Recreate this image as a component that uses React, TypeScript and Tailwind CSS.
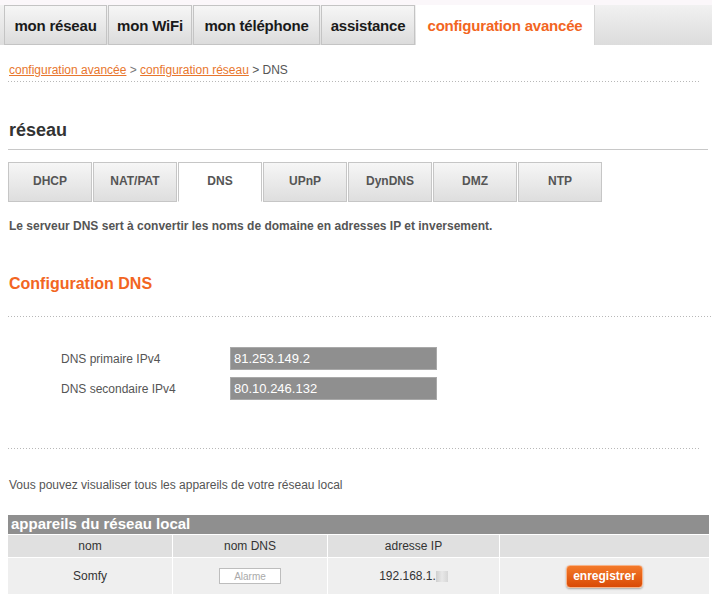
import React from 'react';

const mainTabs = [
  { label: 'mon réseau', w: 'w-[103px]' },
  { label: 'mon WiFi', w: 'w-[84px]' },
  { label: 'mon téléphone', w: 'w-[127px]' },
  { label: 'assistance', w: 'w-[94px]' },
];

const subTabs = ['DHCP', 'NAT/PAT', 'DNS', 'UPnP', 'DynDNS', 'DMZ', 'NTP'];

const Dotted = ({ className = '' }: { className?: string }) => (
  <div
    className={
      'h-px bg-[linear-gradient(to_right,#b8b8b8_1px,transparent_1px)] bg-[length:3px_1px] ' + className
    }
  />
);

export default function App() {
  return (
    <div className="w-[712px] h-[600px] overflow-hidden bg-white font-['Liberation_Sans',Arial,sans-serif] text-[#555]">
      {/* top navigation */}
      <div className="h-[5px] bg-[#fbf7fa]" />
      <div className="flex h-[40px] pl-[4px] bg-[linear-gradient(#f2f2f2,#dedede)]">
        {mainTabs.map((t) => (
          <div
            key={t.label}
            className={`${t.w} h-full flex items-center justify-center pt-[3px] border border-[#c4c4c4] mr-px bg-[linear-gradient(#f6f6f6,#dcdcdc)] text-[15px] font-bold text-[#1a1a1a] tracking-[-0.2px]`}
          >
            {t.label}
          </div>
        ))}
        <div className="w-[178px] h-full flex items-center justify-center pt-[3px] bg-white text-[15px] font-bold text-[#f26522] tracking-[-0.2px]">
          configuration avancée
        </div>
        <div className="flex-1 h-full border-l border-[#d6d6d6] bg-[linear-gradient(#f1f1f1,#dcdcdc)]" />
      </div>

      {/* breadcrumb */}
      <div className="px-[9px] pt-[17px] text-[12px] leading-[16px]">
        <a className="text-[#e8762d] underline">configuration avancée</a>
        <span className="text-[#777]"> &gt; </span>
        <a className="text-[#e8762d] underline">configuration réseau</a>
        <span className="text-[#555]"> &gt; DNS</span>
      </div>
      <Dotted className="mt-[3px] ml-[8px] mr-[12px]" />

      {/* page title */}
      <h1 className="px-[9px] pt-[37px] text-[18px] leading-[22px] font-bold text-[#333]">réseau</h1>
      <div className="mt-[8px] ml-[8px] mr-[4px] h-px bg-[#c8c8c8]" />

      {/* sub tabs */}
      <div className="flex pl-[8px] mt-[12px]">
        {subTabs.map((s) => {
          const active = s === 'DNS';
          return (
            <div
              key={s}
              className={`w-[84px] h-[40px] mr-px flex justify-center pt-[9px] text-[12px] font-bold text-[#555] border border-[#c6c6c6] ${
                active ? 'bg-white border-b-white' : 'bg-[linear-gradient(#f6f6f6,#dedede)]'
              }`}
            >
              {s}
            </div>
          );
        })}
      </div>

      <p className="px-[9px] pt-[16px] text-[12px] leading-[16px] font-bold text-[#555]">
        Le serveur DNS sert à convertir les noms de domaine en adresses IP et inversement.
      </p>

      <h2 className="px-[9px] pt-[40px] text-[16px] leading-[20px] font-bold text-[#f26522]">Configuration DNS</h2>
      <Dotted className="mt-[22px] ml-[8px]" />

      {/* form */}
      <div className="mt-[30px] flex flex-col gap-[7px]">
        {[
          ['DNS primaire IPv4', '81.253.149.2'],
          ['DNS secondaire IPv4', '80.10.246.132'],
        ].map(([label, value]) => (
          <div key={label} className="flex items-center h-[23px]">
            <div className="w-[230px] pl-[61px] text-[12px] text-[#555]">{label}</div>
            <div className="w-[207px] h-[23px] bg-[#8f8f8f] border border-[#a9a9a9] pl-[3px] flex items-center text-[13px] text-white">
              {value}
            </div>
          </div>
        ))}
      </div>

      <Dotted className="mt-[48px] ml-[8px] mr-[12px]" />

      <p className="px-[9px] pt-[28px] text-[12px] leading-[16px] text-[#555]">
        Vous pouvez visualiser tous les appareils de votre réseau local
      </p>

      {/* devices table */}
      <div className="mt-[22px] ml-[8px] mr-[3px]">
        <div className="h-[19px] bg-[#8f8f8f] flex items-center pl-[3px] text-[15px] font-bold text-white">
          appareils du réseau local
        </div>
        <div className="flex h-[23px] bg-[#e0e0e0] border-t border-white text-[12px] text-[#333]">
          <div className="w-[165px] flex items-center justify-center border-r border-white">nom</div>
          <div className="w-[155px] flex items-center justify-center border-r border-white">nom DNS</div>
          <div className="w-[172px] flex items-center justify-center border-r border-white">adresse IP</div>
          <div className="flex-1" />
        </div>
        <div className="flex h-[38px] bg-[#efefef] border-t border-white border-b text-[12px] text-[#333]">
          <div className="w-[165px] flex items-center justify-center border-r border-white">Somfy</div>
          <div className="w-[155px] flex items-center justify-center border-r border-white">
            <div className="w-[62px] h-[16px] bg-white border border-[#bdbdbd] flex items-center justify-center text-[10px] text-[#aaa]">
              Alarme
            </div>
          </div>
          <div className="w-[172px] flex items-center justify-center border-r border-white">
            <span>192.168.1.</span>
            <span className="inline-block w-[12px] h-[11px] bg-[linear-gradient(90deg,#cfcfcf,#e8e8e8,#d6d6d6)]" />
          </div>
          <div className="flex-1 flex items-center justify-center">
            <button className="h-[23px] px-[6px] rounded-[4px] border border-[#f7b48a] bg-[linear-gradient(#f47a2a,#d94a06)] text-[12px] font-bold text-white shadow-[0_1px_2px_rgba(0,0,0,0.3)]">
              enregistrer
            </button>
          </div>
        </div>
      </div>
    </div>
  );
}
